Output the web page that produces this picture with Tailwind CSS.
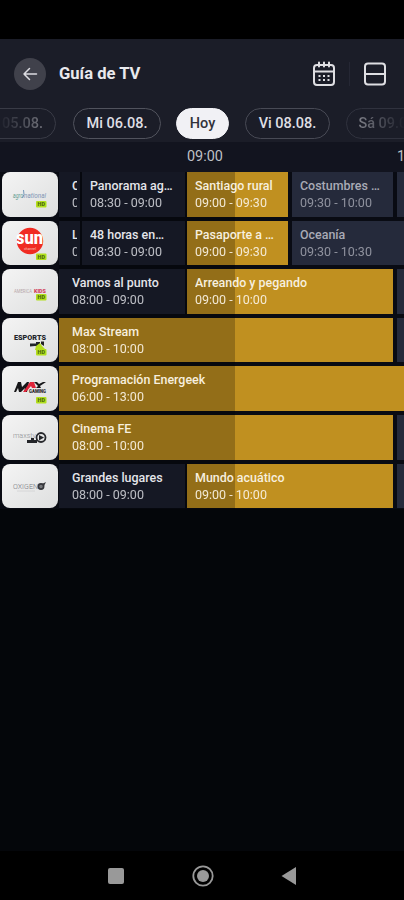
<!DOCTYPE html>
<html lang="es">
<head>
<meta charset="utf-8">
<title>Guía de TV</title>
<script src="https://cdn.jsdelivr.net/npm/@tailwindcss/browser@4"></script>
</head>
<body class="bg-black">
<div class="w-[404px] h-[900px] overflow-hidden bg-[#04060a] flex flex-col font-['Roboto',sans-serif] text-[#dfdfe4]">
  <div class="h-[39px] shrink-0 bg-black"></div>
  <header class="h-[69px] shrink-0 bg-[#1b1d28] flex items-center pl-[14px] pr-[17px]">
    <button class="size-8 rounded-full bg-[#40414b] flex items-center justify-center">
      <svg width="16" height="16" viewBox="0 0 16 16" fill="none" stroke="#dcdce2" stroke-width="1.5" stroke-linecap="round" stroke-linejoin="round"><path d="M14.5 8H2M7.500 2.500 2 8l5.500 5.500"/></svg>
    </button>
    <h1 class="ml-[13px] text-[16.600px] leading-5 font-bold text-[#e9e9ed] grow whitespace-nowrap">Guía de TV</h1>
    <svg width="24" height="26" viewBox="0 0 24 26" fill="none" stroke="#dedee2" stroke-width="2"><rect x="2" y="4" width="20" height="20" rx="3"/><path d="M2 10.500h20"/><path d="M7 1.500v4M12 1.500v4M17 1.500v4" stroke-linecap="round"/><path d="M6.500 15h2m2.500 0h2m2.500 0h2M6.500 19h2m2.500 0h2m2.500 0h2" stroke-width="1.800"/></svg>
    <div class="w-px h-6 bg-[#252734] ml-[13px] mr-[13px]"></div>
    <svg width="24" height="24" viewBox="0 0 24 24" fill="none" stroke="#dedee2" stroke-width="2"><rect x="2" y="1.500" width="20" height="21" rx="3"/><path d="M2 12h20"/></svg>
  </header>
  <nav class="h-[34px] shrink-0 bg-[#1b1d28] overflow-hidden text-[14.500px] font-medium">
    <div class="flex h-[31px] w-[450px] -ml-[30px] [&>div]:shrink-0 [&>div]:rounded-full [&>div]:border [&>div]:flex [&>div]:items-center [&>div]:justify-center [&>div]:whitespace-nowrap">
      <div class="w-[86px] pr-[5px] border-[#393b46] text-transparent bg-gradient-to-r from-[#1b1d28] from-30% to-[#7a7b83] to-90% bg-clip-text">Ma 05.08.</div>
      <div class="w-[88px] ml-[17px] border-[#51535d]">Mi 06.08.</div>
      <div class="w-[53px] ml-[15px] border-[#f1f1f5] bg-[#f1f1f5] text-[#32333b]">Hoy</div>
      <div class="w-[85px] ml-[16px] border-[#484a55]">Vi 08.08.</div>
      <div class="w-[86px] ml-[16px] border-[#30323e] text-transparent bg-gradient-to-r from-[#85868e] from-10% to-[#1b1d28] to-70% bg-clip-text">Sá 09.08.</div>
    </div>
  </nav>
  <div class="h-[30px] shrink-0 bg-[#12141f] flex text-[14.400px] leading-[29px] text-[#bfc0c6] whitespace-nowrap">
    <span class="ml-[187px] w-[210px] shrink-0">09:00</span><span>10:00</span>
  </div>
  <main id="guide" class="relative w-[404px] flex flex-col gap-[4px] bg-[#090b13] pb-px"></main>
  <div class="grow"></div>
  <footer class="h-[49px] shrink-0 bg-black flex items-center justify-between pl-[108px] pr-[108px]">
    <div class="size-4 rounded-[2px] bg-[#999]"></div>
    <svg width="22" height="22" viewBox="0 0 22 22"><circle cx="11" cy="11" r="9.700" fill="none" stroke="#999" stroke-width="1.800"/><circle cx="11" cy="11" r="6" fill="#999"/></svg>
    <svg width="15" height="18" viewBox="0 0 15 18"><path d="M0.500 9 15 0v18z" fill="#999"/></svg>
  </footer>
</div>
<script>
const hd = (x, y) => `<rect x="${x}" y="${y}" width="10.500" height="6.500" rx="1" fill="#b1df1c"/><text x="${x + 5.300}" y="${y + 5.200}" font-size="5.500" font-weight="900" text-anchor="middle" fill="#4c6a10">HD</text>`;
const logos = [
  `<text x="11" y="26" font-size="6.500" font-style="italic" textLength="10" lengthAdjust="spacingAndGlyphs" fill="#639b91">agro</text><text x="22" y="26" font-size="6.500" font-style="italic" textLength="22" lengthAdjust="spacingAndGlyphs" fill="#8296b5">national</text><path d="M20.500 26q2.500-3 1-8" stroke="#5582ac" fill="none" stroke-width=".8"/>` + hd(34, 29),
  `<circle cx="28" cy="20" r="13.200" fill="#f02b22"/><text x="14" y="23" font-size="18" font-weight="900" textLength="27" lengthAdjust="spacingAndGlyphs" fill="#fff">sun</text><text x="22" y="29" font-size="4" textLength="12" lengthAdjust="spacingAndGlyphs" fill="#fbc5bd">channel</text>` + hd(34, 32.500),
  `<text x="12" y="24" font-size="5" textLength="18" lengthAdjust="spacingAndGlyphs" fill="#b8a7aa">AMERICA</text><text x="32" y="24" font-size="5" font-weight="900" textLength="12" lengthAdjust="spacingAndGlyphs" fill="#d2435b">KIDS</text>` + hd(34, 25),
  `<text x="12" y="22" font-size="6.500" font-weight="900" textLength="32" lengthAdjust="spacingAndGlyphs" fill="#22252a">ESPORTS</text><path d="M28 25.500h6v-1.500h4v5l-5-1-5 .5z" fill="#20242a"/><path d="M33 32l1-4 4-3 2 3 4 4z" fill="#b4dc1c"/><path d="M39 23.500h3v4.500l-3-2z" fill="#222"/>` + hd(34, 31),
  `<path d="M12 26l4-10h3l1 5 5-5h2l-2 10h-3l1-4-4 4h-2l-1-4-2 4z" fill="#171719"/><path d="M21 26l7-10h4l2 6h-4l-1-2-5 6z" fill="#df253b"/><path d="M32 16h3l2 2 4-2h3l-6 4 1 2h-5l2-2z" fill="#171719"/><text x="27" y="26.500" font-size="4.800" font-weight="900" textLength="17" lengthAdjust="spacingAndGlyphs" fill="#28282b">GAMING</text>` + hd(34, 31),
  `<text x="11" y="23" font-size="7.500" font-weight="300" textLength="23" lengthAdjust="spacingAndGlyphs" fill="#8c8e92">maxstv</text><circle cx="39" cy="22.500" r="4.500" fill="none" stroke="#28292d" stroke-width="1.800"/><path d="M25 25h4v-2h3v2h3v3h-10z" fill="#242529"/><path d="M37 20l5 2.500-5 3z" fill="#242529"/>`,
  `<text x="11" y="25" font-size="7" font-weight="300" textLength="25" lengthAdjust="spacingAndGlyphs" fill="#77797f">OXIGEN</text><circle cx="39" cy="22.500" r="2.600" fill="#77797d" stroke="#36373b" stroke-width="1.700"/><path d="M40 20l4-2-2 4z" fill="#36373b"/><path d="M15 27h18" stroke="#d0d0d2" stroke-width=".8"/>`
];
const past = 'bg-[#1c2030] text-[#e4e5ea]', live = 'bg-[#c09020] text-[#f7efdf]', next = 'bg-[#252a3b] text-[#a9abb6]';
/* [gap before, width, state, title, time, left padding] */
const rows = [
  [[0, 21, past, 'C', '0', 'clip'], [2, 103, past, 'Panorama ag…', '08:30 - 09:00'], [2, 101, live, 'Santiago rural', '09:00 - 09:30'], [4, 101, next, 'Costumbres …', '09:30 - 10:00'], [4, 12, next, '', '']],
  [[0, 21, past, 'L', '0', 'clip'], [2, 103, past, '48 horas en…', '08:30 - 09:00'], [2, 101, live, 'Pasaporte a …', '09:00 - 09:30'], [4, 116, next, 'Oceanía', '09:30 - 10:30']],
  [[0, 126, past, 'Vamos al punto', '08:00 - 09:00', 'wide'], [2, 206, live, 'Arreando y pegando', '09:00 - 10:00'], [4, 12, next, '', '']],
  [[0, 334, live, 'Max Stream', '08:00 - 10:00', 'wide'], [4, 12, next, '', '']],
  [[0, 350, live, 'Programación Energeek', '06:00 - 13:00', 'wide']],
  [[0, 334, live, 'Cinema FE', '08:00 - 10:00', 'wide'], [4, 12, next, '', '']],
  [[0, 126, past, 'Grandes lugares', '08:00 - 09:00', 'wide'], [2, 206, live, 'Mundo acuático', '09:00 - 10:00'], [4, 12, next, '', '']]
];
document.getElementById('guide').innerHTML = rows.map((r, i) => `
  <div class="flex h-[44.6px] w-[404px]">
    <div class="ml-[2px] w-[56px] h-[44.6px] shrink-0 rounded-[8px] overflow-hidden bg-linear-to-br from-[#f4f4f4] to-[#dedfdf]"><svg width="56" height="45" viewBox="0 0 56 45" font-family="Roboto, sans-serif">${logos[i]}</svg></div>
    <div class="flex ml-[1px] w-[345px] overflow-hidden shrink-0">${r.map(c => `
      <div class="shrink-0 overflow-hidden pt-[5px] ${c[5] ? 'pl-[13px]' : 'pl-[8px]'} ${c[2]}" style="width:${c[1]}px;margin-left:${c[0]}px">
        <div class="relative z-10 text-[12.450px] leading-[17px] font-medium whitespace-nowrap overflow-hidden ${c[5] === 'clip' ? 'w-[5px]' : ''}">${c[3]}</div>
        <div class="relative z-10 text-[12.500px] leading-[17px] whitespace-nowrap overflow-hidden ${c[2] === live ? 'opacity-95' : 'opacity-80'} ${c[5] === 'clip' ? 'w-[5px]' : ''}">${c[4]}</div>
      </div>`).join('')}
    </div>
  </div>`).join('') + '<div class="absolute left-[59px] top-0 bottom-0 w-[176px] bg-black/23 pointer-events-none"></div>';
</script>
</body>
</html>
